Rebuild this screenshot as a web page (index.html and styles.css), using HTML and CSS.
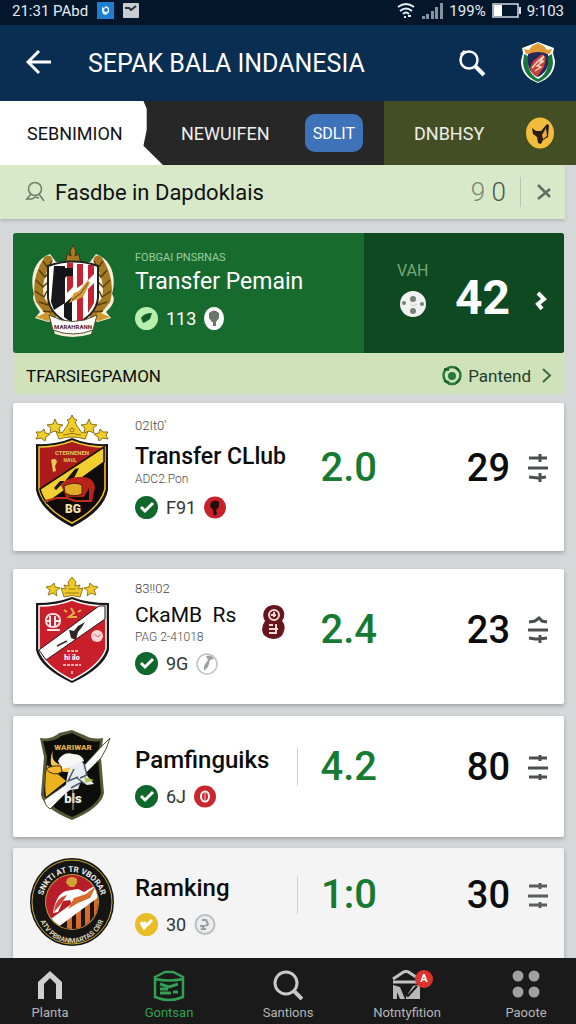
FILE: index.html
```html
<!DOCTYPE html>
<html lang="id">
<head>
    <meta charset="UTF-8">
    <meta name="viewport" content="width=device-width, initial-scale=1.0">
    <title>Sepak Bala Indanesia</title>
    <link rel="stylesheet" href="styles.css">
</head>
<body>
    <!-- Status bar -->
    <div class="status-bar">
        <span>21:31 PAbd</span>
        <svg class="status-app" width="17" height="17" viewBox="0 0 17 17"><rect width="17" height="17" fill="#1c7fd0"/><path d="M5 5l2 1 2-2 3 2v4l-3 3-3-1-1-3z" fill="#e8f8ff"/><circle cx="9" cy="8" r="2" fill="#1c7fd0"/></svg>
        <svg class="status-app" width="16" height="15" viewBox="0 0 16 15"><rect width="16" height="15" rx="1" fill="#c9ccd0"/><path d="M2 5h4l2 2 5-4" fill="none" stroke="#27313b" stroke-width="2"/></svg>
        <div class="status-right">
            <svg width="20" height="17" viewBox="0 0 20 17" fill="none" stroke="#e6ecf2" stroke-width="2"><path d="M2 5q8-6 16 0M4 9q6-5 12 0M7 12q3-3 6 0"/><path d="M8 15h2M12 14h3"/></svg>
            <svg width="21" height="16" viewBox="0 0 21 16" fill="#8792a0"><path d="M0 13h3v3H0zM4 11h3v5H4zM9 8h3v8H9zM13 4h3v12h-3zM18 0h3v16h-3z"/></svg>
            <span>199%</span>
            <svg width="29" height="15" viewBox="0 0 29 15"><rect x="1" y="1" width="25" height="13" fill="none" stroke="#d5dbe2" stroke-width="1.5"/><rect x="2" y="2" width="8" height="11" fill="#fff"/><path d="M28 4v7" stroke="#d5dbe2" stroke-width="2"/></svg>
            <span>9:103</span>
        </div>
    </div>

    <!-- App header -->
    <header class="app-header">
        <button class="icon-btn" aria-label="Back">
            <svg width="26" height="26" viewBox="0 0 26 26" fill="none" stroke="#fff" stroke-width="3"><path d="M25 12H3M13 1L2 12l11 11"/></svg>
        </button>
        <h1>SEPAK BALA INDANESIA</h1>
        <button class="icon-btn" aria-label="Search">
            <svg width="28" height="28" viewBox="0 0 28 28" fill="none" stroke="#fff"><circle cx="11" cy="11" r="8.500" stroke-width="2.500"/><path d="M17 17l9 9" stroke-width="4"/><path d="M3 6l4-4" stroke-width="3"/></svg>
        </button>
        <svg class="header-crest" width="36" height="42" viewBox="0 0 36 42">
            <path d="M2 6l8-3 8-3 8 3 8 3-1 5 2 8c0 11-6 18-17 22C7 37 1 30 1 19l2-8z" fill="#fff"/>
            <path d="M4 12l4 2v9q2 10 10 14 8-4 10-14v-9l4-2 1 9q-1 13-15 19Q4 34 3 21z" fill="#16743a"/>
            <path d="M4 7l5 1 3-4 6-3 6 3 3 4 5-1-2 5-6-1-6 1-6-1-6 1z" fill="#e49a36"/>
            <path d="M8 12q10-4 20 0v11q-2 8-10 12Q10 31 8 23z" fill="#232a59"/>
            <path d="M10 26l3-7 9-7 4 4-2 9-7 10q-5-2-7-9z" fill="#c9403a"/>
            <path d="M12 26l6-7 6-5-4 6 4-1-7 5 4 1-6 4" fill="none" stroke="#f7d5bd" stroke-width="1.500"/>
        </svg>
    </header>

    <!-- Category tabs -->
    <nav class="tabs">
        <button class="tab tab-active">SEBNIMION</button>
        <button class="tab tab-dark">NEWUIFEN</button>
        <button class="tab-pill">SDLIT</button>
        <button class="tab tab-olive">
            DNBHSY
            <svg width="28" height="32" viewBox="0 0 28 32"><ellipse cx="14" cy="16" rx="14" ry="15.500" fill="#f2bd3c"/><path d="M6 11l4 3h5l6-7 2 1-1 12-5 3-2 4-3-1-1-6-4-3z" fill="#2a1d14"/><path d="M16 18l4-7 1 8-4 3z" fill="#e9ae3a"/></svg>
        </button>
    </nav>

    <form class="search-bar">
        <svg width="20" height="22" viewBox="0 0 20 22" fill="none" stroke="#6f7d68" stroke-width="1.500"><circle cx="10" cy="8" r="6.500"/><path d="M6 13l-5 6M14 13l5 7M2 18h5l3-2 4 1"/></svg>
        <input type="text" class="search-input" value="Fasdbe in Dapdoklais" aria-label="Search">
        <span class="search-count"><span>9</span> <span class="count-dark">0</span></span>
        <button type="button" class="search-clear" aria-label="Clear">
            <svg width="14" height="16" viewBox="0 0 14 16" fill="none" stroke="#626d61" stroke-width="2.500"><path d="M1 1l12 12M1 15L13 5"/></svg>
        </button>
    </form>

    <main class="content">
        <!-- Featured transfer -->
        <section class="featured">
            <div class="featured-main">
                <svg class="crest" width="84" height="92" viewBox="0 0 84 92">
                    <path d="M19 9C4 14-2 31 3 49c-3 5 3 13 6 18l-5 6 13 4 3-1 4 13q17 6 36 0l4-13 3 1 13-4-5-6c7-6 10-13 6-18 5-18-1-35-16-40l-6 8H25z" fill="#f3f1dd"/>
                    <g fill="none" stroke="#a67a20" stroke-width="9" stroke-linecap="round">
                        <path d="M17 15Q4 35 9 55l12 15M67 15q13 20 8 40L63 70"/>
                    </g>
                    <g fill="none" stroke="#593e14" stroke-width="1.500">
                        <path d="M12 16l5 7 4-7M8 25l6 7 5-6M5 35l7 7 5-5M4 46l9 6 3-6M8 57l9 3 2-7M12 66l9 1M72 16l-5 7-4-7M76 25l-6 7-5-6M79 35l-7 7-5-5M80 46l-9 6-3-6M76 57l-9 3-2-7M72 66l-9 1"/>
                    </g>
                    <path d="M5 72l12-5 5 8-6 1zM79 72l-12-5-5 8 6 1z" fill="#cf9a2b"/>
                    <path d="M35 15l1-6 4 2-1-5 3-6 3 6-1 5 4-2 1 6 2 4H33z" fill="#a87920" stroke="#45310f"/>
                    <path d="M17 21q25-9 50 0v32q-2 18-25 27Q19 71 17 53z" fill="#fff" stroke="#20221f" stroke-width="2"/>
                    <path d="M23 21h11v37l-11 7-3-8zM33 59l8-7v26l-8-6z" fill="#18171b"/>
                    <path d="M36 18h6v24l-6 6zM46 19h6v20l-6 4zM46 55l6-6v26l-6 3zM57 44l6-6v20l-6 10zM57 20h6v9l-6 6z" fill="#c32432"/>
                    <path d="M24 23h18v8h-6l-4 4-5-2z" fill="#141317"/>
                    <path d="M38 58l5-10 5-2 9-11 2 3-7 14z" fill="#d59c3c"/>
                    <path d="M41 55l9-7 7-10" fill="none" stroke="#67421b"/>
                    <path d="M18 70q24 13 48 0l-4 15q-20 8-40 0z" fill="#fff" stroke="#5a4c36"/>
                    <text x="42" y="84" text-anchor="middle" font-size="6" font-weight="700" fill="#4f1d24">MARAHRANN</text>
                </svg>
                <div class="info">
                    <p class="eyebrow">FOBGAI PNSRNAS</p>
                    <h2>Transfer Pemain</h2>
                    <p class="meta">
                        <svg width="23" height="23" viewBox="0 0 23 23"><circle cx="11.500" cy="11.500" r="11.500" fill="#b9efac"/><path d="M6 11q3-5 11-5l-2 6q-4 3-7 4z" fill="#14592c"/></svg>
                        <span>113</span>
                        <svg width="20" height="23" viewBox="0 0 20 23"><ellipse cx="10" cy="11.500" rx="10" ry="11.500" fill="#fff"/><path d="M5 6q5-5 10 0v5l-3 4H8l-3-4zM9 14h3v5H9z" fill="#6c756d"/></svg>
                    </p>
                </div>
            </div>
            <div class="featured-side">
                <div class="featured-van">
                    <span>VAH</span>
                    <svg width="26" height="26" viewBox="0 0 26 26"><circle cx="13" cy="13" r="13" fill="#f0f2f0"/><g fill="#777f7a"><circle cx="13" cy="8" r="3"/><circle cx="13" cy="20" r="3"/><circle cx="4" cy="12" r="2"/><circle cx="22" cy="13" r="2"/></g><path d="M10 12l3 3 4-2" fill="none" stroke="#cbd0cc"/></svg>
                </div>
                <strong>42</strong>
                <svg class="featured-arrow" width="14" height="20" viewBox="0 0 14 20" fill="none" stroke="#fff" stroke-width="4"><path d="M4 2l6 6-6 5 4 5"/></svg>
            </div>
        </section>

        <div class="section-bar">
            <h3>TFARSIEGPAMON</h3>
            <a href="#">
                <svg width="20" height="21" viewBox="0 0 20 21"><circle cx="10" cy="10.500" r="8.500" fill="none" stroke="#277a3e" stroke-width="2.500"/><path d="M2 4l5 1M13 2l4 4M2 16l5 1M14 18l4-4" stroke="#1b5c2d" stroke-width="2"/><circle cx="10" cy="11" r="4" fill="#277a3e"/></svg>
                <span>Pantend</span>
                <svg width="10" height="15" viewBox="0 0 10 15" fill="none" stroke="#3d6946" stroke-width="2"><path d="M1 1l7 6.500L1 14"/></svg>
            </a>
        </div>

        <!-- Club list -->
        <article class="card card-lg">
            <svg class="crest" width="84" height="112" viewBox="0 0 84 112">
                <g fill="#f1cd28" stroke="#8b711d">
                    <path d="M29 24l-4-10 7 4 5-7 2-4-2-2 3-1 2-4 2 4 3 1-2 2 2 4 5 7 7-4-4 10q-13-4-26 0z"/>
                    <path d="M25 4l2 5 6 1-4 3 1 5-5-2-5 2 1-5-4-3 6-1zM59 4l-2 5-6 1 4 3-1 5 5-2 5 2-1-5 4-3-6-1zM14 14l1 4 5 1-4 3-1 4-4-3-5 1 2-4-2-3h5zM70 14l-1 4-5 1 4 3 1 4 4-3 5 1-2-4 2-3h-5z"/>
                    <circle cx="42" cy="15" r="2"/><path d="M33 20q9-3 18 0" fill="none"/>
                </g>
                <path d="M42 23q16 7 36 6v46q-4 21-36 37Q10 96 6 75V29q20 1 36-6z" fill="#151412"/>
                <path d="M42 26q15 6 33 6v42q-5 19-33 34Q13 93 9 74V32q18 0 33-6z" fill="#ac1c1b" stroke="#e9c72e" stroke-width="1.500"/>
                <path d="M74 47v27q-5 19-32 33-18-9-27-21z" fill="#0e0b0a"/>
                <path d="M10 74l64-42v15L17 88q-5-6-7-14z" fill="#f2cf30" stroke="#171108" stroke-width="1.500"/>
                <path d="M24 73l6-7 5 0-9 9zM35 66l10-12 4-1-5 10z" fill="#1d150c"/>
                <path d="M31 70q8-9 20-8 12-1 14 10l-3 15-3-1v-13l-5 9H36z" fill="#b92319"/>
                <path d="M34 71q10-5 18-1v9q-9 4-17-1z" fill="#e0ad25" stroke="#521b0d"/>
                <path d="M15 86l12-3h10l8 3h17" stroke="#c52e1b" stroke-width="2" fill="none"/>
                <text x="42" y="40" text-anchor="middle" font-size="6" font-weight="700" fill="#e4c45e">CTERNENEN</text>
                <text x="40" y="47" text-anchor="middle" font-size="5" font-weight="700" fill="#e4c45e">NAUL</text>
                <path d="M21 45q5-3 6 2l-2 4 1 5-3 1-1-7z" fill="#edc95c"/>
                <text x="43" y="98" text-anchor="middle" font-size="12" font-weight="900" fill="#f2e1a8">BG</text>
            </svg>
            <div class="info">
                <p class="eyebrow">02It0'</p>
                <h2 class="strong">Transfer CLlub</h2>
                <p class="sub">ADC2.Pon</p>
                <p class="meta">
                    <svg width="23" height="23" viewBox="0 0 23 23"><circle cx="11.500" cy="11.500" r="11.500" fill="#10672b"/><path d="M6 11l4 4 8-8" fill="none" stroke="#fff" stroke-width="3"/></svg>
                    <span>F91</span>
                    <svg width="22" height="23" viewBox="0 0 22 23"><circle cx="11" cy="11.500" r="11" fill="#c7222a"/><path d="M7 6q5-3 8 0v5l-3 3 1 4-3 2-1-6-3-4z" fill="#230d0d"/></svg>
                </p>
            </div>
            <div class="stats">
                <span class="score">2.0</span>
                <span class="total">29</span>
                <button class="icon-btn" aria-label="Options for Transfer CLlub">
                    <svg width="20" height="28" viewBox="0 0 20 28" fill="none" stroke="#4c4e4f" stroke-width="3"><path d="M1 4h18M0 14h20M1 23l9 1 8-1M12 0v8M12 19v9"/></svg>
                </button>
            </div>
        </article>

        <article class="card card-md">
            <svg class="crest" width="84" height="106" viewBox="0 0 84 106">
                <g fill="#efc928" stroke="#947a1a">
                    <path d="M34 20l-3-9 5 1-2-4 5 1-1-4 4-5 4 5-1 4 5-1-2 4 5-1-3 9q-8-3-16 0z"/>
                    <path d="M24 6l1 4 5 1-4 3 1 5-4-3-5 2 2-5-4-3 5-1zM60 6l-1 4-5 1 4 3-1 5 4-3 5 2-2-5 4-3-5-1z"/>
                    <path d="M35 16h14M38 12h8" fill="none"/>
                </g>
                <path d="M42 20q15 6 37 6v47q-5 18-37 33Q10 91 6 73V26q21 0 36-6z" fill="#1b1719"/>
                <path d="M42 23q15 6 34 6v43q-6 17-34 31Q14 89 9 72V29q18 0 33-6z" fill="#c91f2b" stroke="#fff" stroke-width="1.500"/>
                <path d="M9 73l60-44h6v13L16 83z" fill="#fff" stroke="#271b1d"/>
                <rect x="16" y="37" width="14" height="13" rx="6" fill="none" stroke="#f8dede" stroke-width="2"/>
                <path d="M20 39v10M25 39v10M16 44h4M25 44h5M17 53h13" stroke="#fbe6e6" stroke-width="2"/>
                <path d="M34 33l3 2M41 31l3 5-5 4h8M51 33l-3 2" fill="none" stroke="#e3b34b" stroke-width="2"/>
                <path d="M39 53l5 1 4-5 7-4-3 5-4 5-2 8-5-2z" fill="#30272a"/>
                <path d="M27 69l10-5" stroke="#332a2d" stroke-width="1.500"/>
                <circle cx="67" cy="59" r="6" fill="#f7d7d3"/><path d="M64 57l4 3 3-3" stroke="#d8696a" fill="none"/>
                <text x="42" y="83" text-anchor="middle" font-size="7" font-weight="900" fill="#fff">hi ilo</text>
                <path d="M37 74h11M33 88h18M42 94v4" stroke="#efb3ac" stroke-width="2" stroke-dasharray="3 1"/>
            </svg>
            <div class="info">
                <p class="eyebrow">83!!02</p>
                <h2>CkaMB &nbsp;Rs</h2>
                <p class="sub">PAG 2-41018</p>
                <p class="meta">
                    <svg width="23" height="23" viewBox="0 0 23 23"><circle cx="11.500" cy="11.500" r="11.500" fill="#10672b"/><path d="M6 11l4 4 8-8" fill="none" stroke="#fff" stroke-width="3"/></svg>
                    <span>9G</span>
                    <svg width="22" height="22" viewBox="0 0 22 22"><circle cx="11" cy="11" r="10" fill="#fff" stroke="#bfc2c3" stroke-width="1.500"/><path d="M10 3q5-2 8 3l-4 1-2 7-4 4q-1-4 1-7l3-4z" fill="#9da0a1"/></svg>
                </p>
            </div>
            <svg class="club-badge" width="23" height="34" viewBox="0 0 23 34"><path d="M2 6q3-6 10-6 8 0 10 7 1 6-2 9 4 4 2 10-2 8-11 8-10-1-11-9 0-5 3-9-3-4-1-10z" fill="#68151b"/><circle cx="12" cy="10" r="5" fill="none" stroke="#f0d8d5" stroke-width="2"/><path d="M12 7v5M9 10h5M7 20h4M14 19v8M7 24h9M7 28h8" stroke="#f0d8d5" stroke-width="2"/></svg>
            <div class="stats">
                <span class="score">2.4</span>
                <span class="total">23</span>
                <button class="icon-btn" aria-label="Options for CkaMB Rs">
                    <svg width="20" height="28" viewBox="0 0 20 28" fill="none" stroke="#4c4e4f" stroke-width="3"><path d="M1 6l6-1 4-3 3 3 5 1M0 14h20M1 22l6 1h4l8-1M12 19v8"/></svg>
                </button>
            </div>
        </article>

        <article class="card card-sm">
            <svg class="crest" width="84" height="92" viewBox="0 0 84 92">
                <path d="M10 8q12 2 19-5l13-3 12 5q8 5 19 3l-2 20 3 35q-3 15-32 27Q14 79 11 65l3-38z" fill="#555936"/>
                <path d="M13 11q12 1 18-5l11-3 10 5q8 5 18 3l-2 17 3 35q-3 13-29 24Q17 76 14 64l3-37z" fill="#0d0e0c"/>
                <path d="M17 35l19 16-20 16q-2-10 1-32z" fill="#eeb21f"/>
                <path d="M14 70l24-17 34-37 8-8q-3 11-9 20L20 79q-5-3-6-9z" fill="#fff" stroke="#4b5530"/>
                <path d="M23 20q-3 12 8 15l9 2-1 5q-14 1-18-8-1-8 2-14z" fill="#f6c94e"/>
                <path d="M28 31q5-10 15-7 9 0 11 7l-9 5-13 3z" fill="#f6f7f5"/>
                <path d="M40 37l12-5 5 5-3 5 5 6 5 6-7 1-6-4-3 8-8 1-4 3q-1-13 4-26z" fill="#e8edf2"/>
                <path d="M31 36q-9-1-15 3 7 8 16 3z" fill="#f2b72d" stroke="#3c2d0c"/>
                <path d="M44 39l-6 12 10-4M54 34l3 11-7 3M47 48l8 6M41 58l9-5" fill="none" stroke="#4d5964" stroke-width="1.500"/>
                <path d="M54 47l10 3-8 3" fill="#b3c245"/>
                <text x="43" y="20" text-anchor="middle" font-size="8" font-weight="900" fill="#ddb04a">WARIWAR</text>
                <text x="43" y="73" text-anchor="middle" font-size="13" font-weight="900" fill="#efeee2">bls</text>
                <path d="M43 60v20" stroke="#b6b3a7"/>
            </svg>
            <div class="info">
                <h2 class="strong">Pamfinguiks</h2>
                <p class="meta">
                    <svg width="23" height="23" viewBox="0 0 23 23"><circle cx="11.500" cy="11.500" r="11.500" fill="#10672b"/><path d="M6 11l4 4 8-8" fill="none" stroke="#fff" stroke-width="3"/></svg>
                    <span>6J</span>
                    <svg width="22" height="23" viewBox="0 0 22 23"><circle cx="11" cy="11.500" r="11" fill="#c9262d"/><ellipse cx="11" cy="11.500" rx="4" ry="5" fill="none" stroke="#fff" stroke-width="2"/><path d="M11 8v7" stroke="#f5c5c4"/></svg>
                </p>
            </div>
            <div class="stats">
                <span class="score score-line">4.2</span>
                <span class="total">80</span>
                <button class="icon-btn" aria-label="Options for Pamfinguiks">
                    <svg width="20" height="28" viewBox="0 0 20 28" fill="none" stroke="#4c4e4f" stroke-width="3"><path d="M1 5h18M0 15h20M1 24h18M12 2v6M12 21v6"/></svg>
                </button>
            </div>
        </article>

        <article class="card card-last">
            <svg class="crest" width="84" height="88" viewBox="0 0 84 88">
                <defs>
                    <path id="ringTop" d="M12 46A30 32 0 0 1 72 46"/>
                    <path id="ringBottom" d="M8 50A34 35 0 0 0 76 50"/>
                    <clipPath id="disc"><ellipse cx="42" cy="44" rx="26" ry="27"/></clipPath>
                </defs>
                <ellipse cx="42" cy="44" rx="42" ry="44" fill="#161514"/>
                <ellipse cx="42" cy="44" rx="40" ry="42" fill="none" stroke="#c9a935"/>
                <ellipse cx="42" cy="44" rx="27" ry="28" fill="#bd9d37"/>
                <g clip-path="url(#disc)">
                    <path d="M14 14h56v60H14z" fill="#ba1d2a"/>
                    <path d="M14 72l55-34v38H14z" fill="#1c1413"/>
                    <path d="M37 58h5v16h-5zM46 52h5v22h-5zM55 46h5v26h-5zM64 40h4v27h-4z" fill="#d76b2c"/>
                    <path d="M14 66l56-41v13L20 75z" fill="#fff"/>
                    <path d="M23 55q3-19 13-22l12-2 6 3 12-7v12L43 50l-3-8-7 1-5 11z" fill="#fff"/>
                    <path d="M38 51l6-11 12-4 10-8-6 12-12 5z" fill="#d76b2c"/>
                    <path d="M24 54q1-14 13-17l-6 9z" fill="#d34335"/>
                </g>
                <path d="M37 21q5-4 10 0v4l-3 4h-4l-4-4z" fill="#d1a236"/>
                <text class="ring-text" font-size="8" fill="#f0eee6"><textPath href="#ringTop" startOffset="50%" text-anchor="middle">SNKTI AT TR VBORAR</textPath></text>
                <text class="ring-text" font-size="7" fill="#d8cfae"><textPath href="#ringBottom" startOffset="50%" text-anchor="middle">ATV PBRANMARTAS CRR</textPath></text>
            </svg>
            <div class="info">
                <h2 class="strong">Ramking</h2>
                <p class="meta">
                    <svg width="23" height="23" viewBox="0 0 23 23"><circle cx="11.500" cy="11.500" r="11.500" fill="#e9bd27"/><path d="M6 9l3 6 8-8M9 9l2 3" fill="none" stroke="#fff" stroke-width="3"/></svg>
                    <span>30</span>
                    <svg width="22" height="23" viewBox="0 0 22 23"><circle cx="11" cy="11.500" r="9.500" fill="#ececed" stroke="#bcbec0" stroke-width="2"/><path d="M8 7h4l2 4-2 2M6 13h4l-2 3h4" fill="none" stroke="#9b9da0" stroke-width="2"/></svg>
                </p>
            </div>
            <div class="stats">
                <span class="score score-line">1:0</span>
                <span class="total">30</span>
                <button class="icon-btn" aria-label="Options for Ramking">
                    <svg width="20" height="28" viewBox="0 0 20 28" fill="none" stroke="#5a5c5d" stroke-width="3"><path d="M1 5h18M0 15h20M1 24h18M12 2v6M12 21v6"/></svg>
                </button>
            </div>
        </article>
    </main>

    <!-- Bottom navigation -->
    <nav class="bottom-nav">
        <a href="#">
            <svg width="28" height="30" viewBox="0 0 28 30"><path d="M2 29V12L14 1l12 11v17h-6V14l-6-6-6 6v15z" fill="#d0d0d0"/></svg>
            Planta
        </a>
        <a href="#" class="active">
            <svg width="32" height="32" viewBox="0 0 32 32" fill="none" stroke="#31a052" stroke-width="2.500"><path d="M2 7l10-5h8l10 5v20q-14 6-28 0zM2 9q14 3 28 0"/><path d="M7 14l9 3 9-3M7 19h8M7 23h11M20 22h5" stroke-width="3"/></svg>
            Gontsan
        </a>
        <a href="#">
            <svg width="30" height="30" viewBox="0 0 30 30" fill="none" stroke="#c9c9c9" stroke-width="3"><circle cx="13" cy="13" r="11"/><path d="M20 20l9 9" stroke-width="4"/></svg>
            Santions
        </a>
        <a href="#">
            <span class="nav-icon">
                <svg width="30" height="30" viewBox="0 0 30 30"><path d="M1 9l9-6q4-3 8 0l9 6M1 12h27" fill="none" stroke="#c2c2c2" stroke-width="3"/><path d="M1 15l7 2 5 12H8l-3-7v7H1zM14 27l7-11 7-2v15H14z" fill="#b9b9b9"/><path d="M13 22l3 4 9-10" fill="none" stroke="#1a1a1a" stroke-width="2"/></svg>
                <span class="badge">A</span>
            </span>
            Notntyfition
        </a>
        <a href="#">
            <svg width="28" height="28" viewBox="0 0 28 28" fill="#a0a0a0"><circle cx="6" cy="6" r="5.500"/><circle cx="22" cy="6" r="5.500"/><circle cx="6" cy="22" r="5.500"/><circle cx="22" cy="22" r="5.500"/></svg>
            Paoote
        </a>
    </nav>
</body>
</html>
```
FILE: styles.css
```css
:root {
    --navy: #0a2e52;
    --green: #176b2e;
    --green-dark: #0f4922;
    --mint: #d7e9c8;
    --bg: #d5d8d8;
}

* {
    margin: 0;
    padding: 0;
    box-sizing: border-box;
}

body {
    display: flex;
    flex-direction: column;
    height: 100vh;
    overflow: hidden;
    background: var(--bg);
    color: #0c0c0c;
    font-family: Roboto, "Liberation Sans", sans-serif;
}

button {
    border: none;
    background: none;
    font: inherit;
    color: inherit;
    cursor: pointer;
}

a {
    color: inherit;
    text-decoration: none;
}

svg {
    display: block;
    flex-shrink: 0;
}

.icon-btn {
    display: flex;
}

/* Status bar */
.status-bar {
    display: flex;
    align-items: center;
    height: 25px;
    padding: 0 12px 4px;
    background: #03162b;
    color: #e6ecf2;
    font-size: 15px;
    flex-shrink: 0;
}

.status-app {
    margin-left: 9px;
}

.status-right {
    display: flex;
    align-items: center;
    gap: 6px;
    margin-left: auto;
}

/* Header */
.app-header {
    display: flex;
    align-items: center;
    height: 76px;
    padding: 0 20px 0 26px;
    background: var(--navy);
    color: #fff;
    flex-shrink: 0;
}

.app-header h1 {
    flex: 1;
    padding-left: 36px;
    font-size: 25px;
    font-weight: 400;
    white-space: nowrap;
}

.header-crest {
    margin-left: 34px;
}

/* Tabs */
.tabs {
    display: flex;
    align-items: center;
    height: 64px;
    background: #272728;
    color: #eee;
    font-size: 18px;
    flex-shrink: 0;
}

.tab {
    height: 100%;
}

.tab-active {
    width: 163px;
    padding-left: 27px;
    background: #fff;
    color: #111;
    text-align: left;
    clip-path: polygon(0 0, 88% 0, 90% 12%, 90% 45%, 88% 70%, 100% 100%, 0 100%);
}

.tab-dark {
    padding-left: 18px;
}

.tab-pill {
    height: 38px;
    margin: 0 21px 0 auto;
    padding: 0 8px;
    border-radius: 10px;
    background: #3e72b9;
    color: #fff;
    font-size: 16px;
}

.tab-olive {
    display: flex;
    align-items: center;
    justify-content: space-between;
    width: 192px;
    padding: 0 22px 0 30px;
    background: #444e24;
}

/* Search */
.search-bar {
    display: flex;
    align-items: center;
    height: 54px;
    margin-right: 11px;
    padding: 0 14px 0 25px;
    background: var(--mint);
    box-shadow: 0 2px 3px rgba(0, 0, 0, 0.15);
    flex-shrink: 0;
}

.search-input {
    flex: 1;
    min-width: 0;
    padding-left: 10px;
    border: none;
    outline: none;
    background: none;
    color: #111;
    font-family: inherit;
    font-size: 22px;
    font-weight: 400;
}

.search-count {
    padding-right: 14px;
    border-right: 1px solid #b7c5ac;
    color: #7b8675;
    font-size: 26px;
    font-weight: 300;
}

.count-dark {
    color: #4c5749;
}

.search-clear {
    margin-left: 16px;
}

/* Content */
.content {
    flex: 1;
    min-height: 0;
    overflow: hidden;
    padding: 14px 12px 0 13px;
}

.featured {
    display: flex;
    height: 120px;
    border-radius: 3px;
    overflow: hidden;
    background: var(--green);
    color: #fff;
}

.featured-main {
    display: flex;
    align-items: flex-start;
    flex: 1;
    padding: 12px 0 0 18px;
    gap: 20px;
}

.featured .info {
    padding-top: 4px;
}

.featured-side {
    display: flex;
    align-items: center;
    width: 200px;
    padding: 0 16px 0 33px;
    background: var(--green-dark);
}

.featured-van {
    display: flex;
    flex-direction: column;
    align-items: center;
    gap: 10px;
    padding-bottom: 8px;
    color: #76a878;
    font-size: 16px;
    line-height: 20px;
}

.featured-side strong {
    margin: 10px 24px 0 auto;
    font-size: 48px;
    font-weight: 700;
    line-height: 56px;
}

.featured-arrow {
    margin-top: 16px;
}

.featured .eyebrow {
    color: #9bcc9d;
    font-weight: 400;
    font-size: 11px;
}

.featured .meta {
    margin-top: 10px;
    color: #fff;
}

.section-bar {
    display: flex;
    align-items: center;
    justify-content: space-between;
    height: 41px;
    margin-bottom: 9px;
    padding: 4px 12px 0 13px;
    background: #cfe2ba;
}

.section-bar h3 {
    font-size: 17px;
    font-weight: 400;
}

.section-bar a {
    display: flex;
    align-items: center;
    gap: 6px;
    color: #263e2b;
    font-size: 17px;
}

.section-bar a span {
    padding-right: 5px;
}

/* Cards */
.card {
    display: flex;
    align-items: flex-start;
    padding: 0 16px 0 17px;
    border-radius: 2px;
    background: #fff;
    box-shadow: 0 2px 4px rgba(0, 0, 0, 0.25);
}

.card .info {
    flex: 1;
    min-width: 0;
    padding-left: 21px;
}

.card-lg {
    margin-bottom: 18px;
    padding-top: 12px;
    padding-bottom: 24px;
}

.card-md {
    margin-bottom: 12px;
    padding-top: 8px;
    padding-bottom: 21px;
}

.card-sm {
    margin-bottom: 11px;
    padding-top: 14px;
    padding-bottom: 15px;
}

.card-last {
    padding-top: 10px;
    padding-bottom: 30px;
    background: #f4f4f5;
}

.eyebrow {
    color: #444;
    font-size: 13px;
    font-weight: 300;
    line-height: 18px;
}

.info h2 {
    font-size: 23px;
    font-weight: 400;
    line-height: 30px;
    white-space: nowrap;
}

.info .strong {
    font-size: 24px;
    font-weight: 500;
}

.card-lg .info {
    padding-top: 2px;
}

.card-lg .strong {
    margin-top: 7px;
    font-size: 23px;
}

.card-md .info {
    padding-top: 3px;
}

.card-md h2 {
    margin-top: 2px;
    font-size: 21px;
}

.card-md .meta {
    margin-top: 8px;
}

.card-sm .info,
.card-last .info {
    padding-top: 15px;
}

.sub {
    color: #4b4b4b;
    font-size: 12px;
    font-weight: 300;
    line-height: 14px;
}

.meta {
    display: flex;
    align-items: center;
    gap: 8px;
    margin-top: 10px;
    color: #333;
    font-size: 18px;
    line-height: 23px;
}

.club-badge {
    margin: 28px 12px 0 0;
}

.stats {
    display: flex;
    align-items: center;
    height: 106px;
}

.card-sm .stats,
.card-last .stats {
    height: 74px;
}

.score {
    width: 80px;
    color: #177a33;
    font-size: 40px;
    font-weight: 500;
    line-height: 38px;
    text-align: right;
}

.score-line {
    border-left: 1px solid #d0d0d0;
}

.total {
    width: 133px;
    font-size: 38px;
    font-weight: 500;
    text-align: right;
}

.stats .icon-btn {
    margin-left: 18px;
}

.ring-text {
    font-weight: 700;
}

/* Bottom nav */
.bottom-nav {
    display: flex;
    justify-content: space-between;
    height: 66px;
    background: #1a1a1a;
    color: #b5b5b5;
    font-size: 13px;
    flex-shrink: 0;
}

.bottom-nav a {
    display: flex;
    flex-direction: column;
    align-items: center;
    justify-content: space-between;
    width: 100px;
    padding: 12px 0 4px;
}

.bottom-nav .active {
    color: #31a052;
}

.nav-icon {
    position: relative;
}

.badge {
    position: absolute;
    top: 0;
    right: -11px;
    width: 18px;
    height: 18px;
    border-radius: 50%;
    background: #dc332d;
    color: #fff;
    font-size: 11px;
    font-weight: 700;
    line-height: 18px;
    text-align: center;
}
```
